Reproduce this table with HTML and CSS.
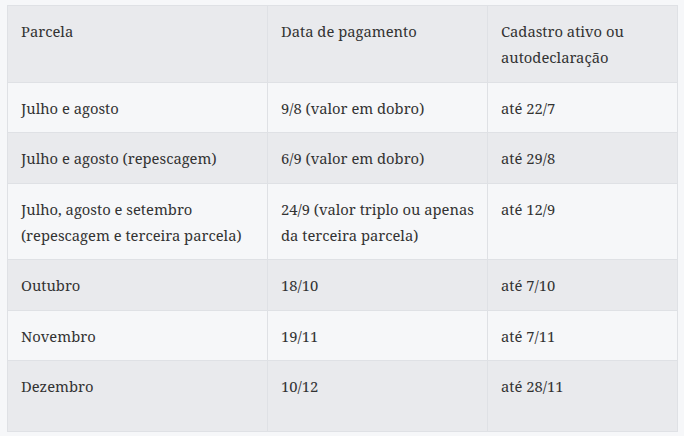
FILE: index.html
```html
<!DOCTYPE html>
<html lang="pt-BR">
<head>
<meta charset="utf-8">
<title>Parcelas</title>
<link rel="stylesheet" href="styles.css">
</head>
<body>
<table class="tabela">
  <colgroup>
    <col class="c1"><col class="c2"><col class="c3">
  </colgroup>
  <thead>
    <tr class="cab"><th>Parcela</th><th>Data de pagamento</th><th>Cadastro ativo ou autodeclaração</th></tr>
  </thead>
  <tbody>
    <tr><td>Julho e agosto</td><td>9/8 (valor em dobro)</td><td>até 22/7</td></tr>
    <tr><td>Julho e agosto (repescagem)</td><td>6/9 (valor em dobro)</td><td>até 29/8</td></tr>
    <tr><td>Julho, agosto e setembro (repescagem e terceira parcela)</td><td>24/9 (valor triplo ou apenas da terceira parcela)</td><td>até 12/9</td></tr>
    <tr><td>Outubro</td><td>18/10</td><td>até 7/10</td></tr>
    <tr><td>Novembro</td><td>19/11</td><td>até 7/11</td></tr>
    <tr class="ultima"><td>Dezembro</td><td>10/12</td><td>até 28/11</td></tr>
  </tbody>
</table>
</body>
</html>
```
FILE: styles.css
```css
html, body {
  margin: 0;
  background: #f6f7f9;
}
body {
  padding: 5px 0 0 7px;
}
.tabela {
  border-collapse: collapse;
  table-layout: fixed;
  width: 670px;
  border: 1px solid #dfe1e5;
  font-family: "Noto Serif", "Liberation Serif", serif;
  font-size: 14.75px;
  color: #333;
}
.c1 { width: 260px; }
.c2 { width: 220px; }
.c3 { width: 190px; }
.tabela th, .tabela td {
  font-family: "Noto Serif", "Liberation Serif", serif;
  font-weight: normal;
  text-align: left;
  vertical-align: top;
  line-height: 26px;
  padding: 12px 13px 11.5px;
  border: 1px solid #dfe1e5;
}
.cab th { background: #e9eaed; }
.tabela tr:nth-child(odd) td { background: #f6f7f9; }
.tabela tr:nth-child(even) td { background: #e9eaed; }
.ultima td { height: 46.5px; }
```
